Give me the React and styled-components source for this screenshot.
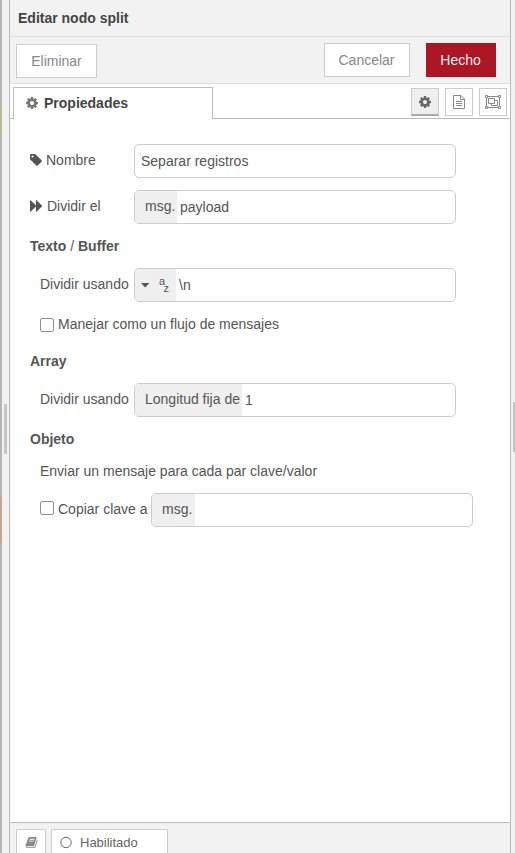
import React from "react";
import styled, { createGlobalStyle } from "styled-components";

const GlobalStyle = createGlobalStyle`
  *, *::before, *::after { box-sizing: border-box; }
  body {
    margin: 0;
    overflow: hidden;
    background: #f2f2f2;
    color: #555;
    font: 14px/20px "Liberation Sans", Arial, sans-serif;
  }
`;

const Page = styled.div`
  display: flex;
  height: 853px;
  width: 515px;
`;

const CanvasEdge = styled.div`
  flex: 0 0 2px;
  background: linear-gradient(
    #b5b5b5 104px, #bcbb98 104px, #bcbb98 136px, #b5b5b5 136px,
    #b5b5b5 497px, #c2a892 497px, #c2a892 543px, #b5b5b5 543px
  );
`;

const Separator = styled.div`
  flex: 0 0 ${(p) => p.$width}px;
  padding: ${(p) => p.$top}px 0 0 2px;
  background: #f2f2f2;
`;

const Grip = styled.div`
  width: ${(p) => p.$width}px;
  height: 50px;
  background: #c6c6c6;
`;

const Tray = styled.section`
  flex: 0 0 502px;
  display: flex;
  flex-direction: column;
  background: #fff;
  border: solid #bbb;
  border-width: 0 1px;
`;

const Header = styled.header`
  height: 37px;
  padding: 8px;
  background: #f2f2f2;
  border-bottom: 1px solid #ddd;
  color: #444;
  font-weight: bold;
`;

const Toolbar = styled.div`
  display: flex;
  align-items: flex-start;
  height: 47px;
  padding: 6px 14px 0 6px;
  background: #f2f2f2;
  border-bottom: 1px solid #ddd;
`;

const Button = styled.button`
  width: ${(p) => p.$width}px;
  height: 34px;
  margin: ${(p) => p.$margin || "0"};
  padding: 0 ${(p) => p.$nudge || 0}px 0 0;
  border: 1px solid ${(p) => (p.$primary ? "#ad1625" : "#ccc")};
  background: ${(p) => (p.$primary ? "#ad1625" : "#fff")};
  color: ${(p) => (p.$primary ? "#eee" : "#888")};
  font: inherit;
`;

const TabBar = styled.nav`
  display: flex;
  height: 35px;
  padding: 3px 3px 0;
  box-shadow: inset 0 -1px #bbb;
`;

const Tab = styled.div`
  display: flex;
  align-items: center;
  gap: 5px;
  width: 200px;
  height: 32px;
  padding: 0 0 2px 11px;
  border: 1px solid #bbb;
  border-bottom: 0;
  background: #fff;
  color: #444;
  font-weight: bold;
  svg { color: #777; }
`;

const TabTools = styled.div`
  display: flex;
  gap: 6px;
  margin: 1px 0 0 auto;
`;

const ToolButton = styled.button`
  display: flex;
  align-items: center;
  justify-content: center;
  width: 28px;
  height: 28px;
  padding: 0;
  border: 1px solid #ccc;
  background: ${(p) => (p.$active ? "#efefef" : "#fff")};
  border-bottom: ${(p) => (p.$active ? "2px solid #aaa" : "1px solid #ccc")};
  color: ${(p) => (p.$active ? "#666" : "#888")};
`;

const Form = styled.form`
  flex: 1;
  padding: 25px 20px 0;
  background: linear-gradient(90deg, #f8f8f8, #fff 4px);
`;

const Row = styled.div`
  display: flex;
  height: ${(p) => p.$height || 34}px;
  margin-bottom: ${(p) => p.$gap ?? 12}px;
  padding-left: ${(p) => (p.$indent ? 10 : 0)}px;
`;

const Label = styled.label`
  display: flex;
  align-items: center;
  flex: 0 0 ${(p) => (p.$width ? `${p.$width}px` : "auto")};
  gap: ${(p) => p.$gap ?? 4}px;
  height: ${(p) => p.$height || 32}px;
  white-space: nowrap;
`;

const SectionTitle = styled.div`
  height: 20px;
  margin-bottom: ${(p) => p.$gap}px;
`;

const Field = styled.div`
  display: flex;
  width: 322px;
  height: 34px;
  border: 1px solid #ccc;
  border-radius: 5px;
  overflow: hidden;
  background: #fff;
`;

const TypePrefix = styled.span`
  display: flex;
  flex: 0 0 ${(p) => p.$width}px;
  height: 32px;
  padding: ${(p) => (p.$menu ? "0 0 0 6px" : "5px 0 0 10px")};
  background: #efefef;
  white-space: nowrap;
`;

const Value = styled.span`
  padding: 7px 0 0 ${(p) => p.$left}px;
  line-height: 19px;
`;

const Checkbox = styled.input`
  appearance: none;
  width: 14px;
  height: 14px;
  margin: ${(p) => p.$margin};
  border: 1px solid #8f8f9d;
  border-radius: 2px;
  background: #fff;
`;

const Footer = styled.footer`
  display: flex;
  gap: 5px;
  height: 31px;
  padding: 6px 6px 0;
  overflow: hidden;
  background: #f2f2f2;
  border-top: 1px solid #bbb;
`;

const FooterButton = styled.button`
  display: flex;
  flex-shrink: 0;
  align-items: center;
  gap: 8px;
  width: ${(p) => p.$width}px;
  height: 28px;
  padding: 0 0 2px 8px;
  border: 1px solid #ccc;
  border-radius: 1px;
  background: #fff;
  color: ${(p) => p.$color};
  font: 13px "Liberation Sans", Arial, sans-serif;
`;

const Glyph = ({ d, size = 14 }) => (
  <svg width={size} height={size} viewBox="0 0 1792 1792" fill="currentColor" aria-hidden="true">
    <path d={d} />
  </svg>
);

const cog = "M1152 896q0-106-75-181t-181-75-181 75-75 181 75 181 181 75 181-75 75-181zm512-109v222q0 12-8 23t-20 13l-185 28q-19 54-39 91 35 50 107 138 10 12 10 25t-9 23q-27 37-99 108t-94 71q-12 0-26-9l-138-108q-44 23-91 38-16 136-29 186-7 28-36 28h-222q-14 0-24.5-8.5t-11.5-21.5l-28-184q-49-16-90-37l-141 107q-10 9-25 9-14 0-25-11-126-114-165-168-7-10-7-23 0-12 8-23 15-21 51-66.5t54-70.5q-27-50-41-99l-183-27q-13-2-21-12.5t-8-23.5v-222q0-12 8-23t19-13l186-28q14-46 39-92-40-57-107-138-10-12-10-24 0-10 9-23 26-36 98.5-107.5t94.5-71.5q13 0 26 10l138 107q44-23 91-38 16-136 29-186 7-28 36-28h222q14 0 24.5 8.5t11.5 21.5l28 184q49 16 90 37l142-107q9-9 24-9 13 0 25 10 129 119 165 170 7 8 7 22 0 12-8 23-15 21-51 66.5t-54 70.5q26 50 41 98l183 28q13 2 21 12.5t8 23.5z";
const book = "M1703 478q40 57 18 129l-275 906q-19 64-76.5 107.5t-122.5 43.5h-923q-77 0-148.5-53.5t-99.5-131.5q-24-67-2-127 0-4 3-27t4-37q1-8-3-21.5t-3-19.5q2-11 8-21t16.5-23.5 16.5-23.5q23-38 45-91.5t30-91.5q3-10 .5-30t-.5-28q3-11 17-28t17-23q21-36 42-92t25-90q1-9-2.5-32t.5-28q4-13 22-30.5t22-22.5q19-26 42.5-84.5t27.5-96.5q1-8-3-25.5t-2-26.5q2-8 9-18t18-23 17-21q8-12 16.5-30.5t15-35 16-36 19.5-32 26.5-23.5 36-11.5 47.5 5.5l-1 3q38-9 51-9h761q74 0 114 56t18 130l-274 906q-36 119-71.5 153.5t-128.5 34.5h-869q-27 0-38 15-11 16-1 43 24 70 144 70h923q29 0 56-15.5t35-41.5l300-987q7-22 5-57 38 15 59 43zm-1064 2q-4 13 2 22.5t20 9.5h608q13 0 25.5-9.5t16.5-22.5l21-64q4-13-2-22.5t-20-9.5h-608q-13 0-25.5 9.5t-16.5 22.5zm-83 256q-4 13 2 22.5t20 9.5h608q13 0 25.5-9.5t16.5-22.5l21-64q4-13-2-22.5t-20-9.5h-608q-13 0-25.5 9.5t-16.5 22.5z";

const TagIcon = () => (
  <svg width="12" height="12" viewBox="128 128 1536 1536" fill="#555" aria-hidden="true">
    <path d="M576 448q0-53-37.5-90.5t-90.5-37.5-90.5 37.5-37.5 90.5 37.5 90.5 90.5 37.5 90.5-37.5 37.5-90.5zm1067 576q0 53-37 90l-491 492q-39 37-91 37-53 0-90-37l-715-716q-38-37-64.5-101t-26.5-117v-416q0-52 38-90t90-38h416q53 0 117 26.5t102 64.5l715 714q37 39 37 91z" />
  </svg>
);

const ForwardIcon = () => (
  <svg width="13" height="12" viewBox="0 0 13 12" fill="#555" aria-hidden="true">
    <path d="M0 .3Q0-.2.5.2L6 5.6V.3q0-.5.5-.1l5.6 5.5q.3.3 0 .6l-5.6 5.5q-.5.4-.5-.1V6.4L.5 11.8q-.5.4-.5-.1z" />
  </svg>
);

const DocumentIcon = () => (
  <svg width="12" height="14" viewBox="0 0 12 14" fill="none" stroke="currentColor" aria-hidden="true">
    <path d="M.5 .5H8L11.5 4V13.5H.5zM7.5.5V4.5H11.5M3 6.5H9M3 8.5H9M3 10.5H9" />
  </svg>
);

const GroupIcon = () => (
  <svg width="16" height="14" viewBox="0 0 16 14" fill="none" stroke="currentColor" aria-hidden="true">
    <path d="M2.5 1.5H13.5M2.5 12.5H13.5M1.5 2.5V11.5M14.5 2.5V11.5M3.5 3.5H9.5V8.5H3.5zM9.5 5.5H12.5V10.5H6.5V8.5" />
    <path fill="#fff" d="M.5.5H2.5V2.5H.5zM13.5.5H15.5V2.5H13.5zM.5 11.5H2.5V13.5H.5zM13.5 11.5H15.5V13.5H13.5z" />
  </svg>
);

const StringTypeIcon = () => (
  <svg width="30" height="32" viewBox="0 0 30 32" fill="#555" aria-hidden="true">
    <path d="M0 14h8.4l-4.2 4.6z" />
    <text x="18" y="16" fontSize="11" fontFamily="Liberation Sans">a</text>
    <text x="22.6" y="23" fontSize="11" fontFamily="Liberation Sans">z</text>
  </svg>
);

const CircleIcon = () => (
  <svg width="12" height="14" viewBox="0 0 12 14" fill="none" stroke="currentColor" aria-hidden="true">
    <circle cx="6" cy="7.5" r="5.2" />
  </svg>
);

export default function App() {
  return (
    <>
      <GlobalStyle />
      <Page>
        <CanvasEdge />
        <Separator $width={7} $top={404}><Grip $width={3} /></Separator>
        <Tray>
          <Header>Editar nodo split</Header>
          <Toolbar>
            <Button $width={81} $margin="1px auto 0 0">Eliminar</Button>
            <Button $width={86} $nudge={1} $margin="0 16px 0 0">Cancelar</Button>
            <Button $width={70} $nudge={1} $primary>Hecho</Button>
          </Toolbar>
          <TabBar>
            <Tab><Glyph d={cog} />Propiedades</Tab>
            <TabTools>
              <ToolButton $active aria-label="Propiedades"><Glyph d={cog} /></ToolButton>
              <ToolButton aria-label="Descripción"><DocumentIcon /></ToolButton>
              <ToolButton aria-label="Apariencia"><GroupIcon /></ToolButton>
            </TabTools>
          </TabBar>
          <Form>
            <Row>
              <Label $width={104}><TagIcon />Nombre</Label>
              <Field><Value $left={6}>Separar registros</Value></Field>
            </Row>
            <Row>
              <Label $width={104}><ForwardIcon />Dividir el</Label>
              <Field><TypePrefix $width={42}>msg.</TypePrefix><Value $left={3}>payload</Value></Field>
            </Row>
            <SectionTitle $gap={12}><b>Texto</b> / <b>Buffer</b></SectionTitle>
            <Row $indent>
              <Label $width={94}>Dividir usando</Label>
              <Field>
                <TypePrefix $width={41} $menu><StringTypeIcon /></TypePrefix>
                <Value $left={3}>\n</Value>
              </Field>
            </Row>
            <Row $indent $height={20} $gap={17}>
              <Label $height={20}><Checkbox type="checkbox" $margin="2px 0 0" />Manejar como un flujo de mensajes</Label>
            </Row>
            <SectionTitle $gap={12}><b>Array</b></SectionTitle>
            <Row $indent>
              <Label $width={94}>Dividir usando</Label>
              <Field><TypePrefix $width={107}>Longitud fija de</TypePrefix><Value $left={3}>1</Value></Field>
            </Row>
            <SectionTitle $gap={12}><b>Objeto</b></SectionTitle>
            <Row $indent $height={20}>Enviar un mensaje para cada par clave/valor</Row>
            <Row $indent>
              <Label $width={111}><Checkbox type="checkbox" $margin="0 0 2px" />Copiar clave a</Label>
              <Field><TypePrefix $width={43}>msg.</TypePrefix></Field>
            </Row>
          </Form>
          <Footer>
            <FooterButton $width={30} $color="#888" aria-label="Información"><Glyph d={book} size={13} /></FooterButton>
            <FooterButton $width={117} $color="#666"><CircleIcon />Habilitado</FooterButton>
          </Footer>
        </Tray>
        <Separator $width={4} $top={402}><Grip $width={2} /></Separator>
      </Page>
    </>
  );
}
